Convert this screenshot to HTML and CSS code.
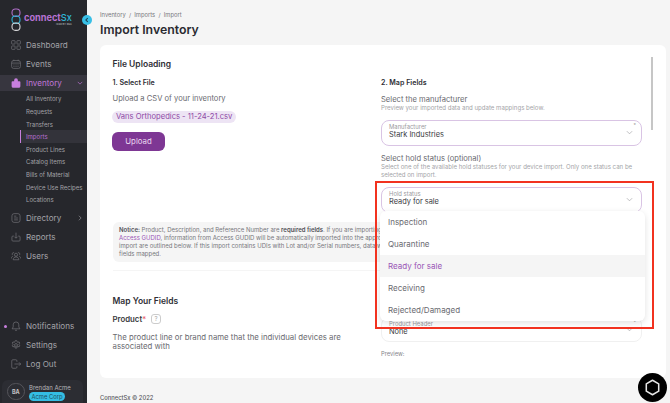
FILE: index.html
```html
<!DOCTYPE html>
<html lang="en">
<head>
    <meta charset="UTF-8">
    <title>Import Inventory</title>
    <link rel="stylesheet" href="styles.css">
</head>
<body>
<div id="app">
    <aside class="sidebar">
        <div class="brand">
            <svg class="brand-mark" width="12" height="23" viewBox="0 0 12 23" fill="none" stroke-width="1.1">
                <rect x="2" y="1" width="8" height="7.4" rx="3.4" stroke="#b06fc9"/>
                <rect x="2" y="8" width="8" height="7.4" rx="3.4" stroke="#2fb5d6"/>
                <rect x="2" y="15" width="8" height="7.4" rx="3.4" stroke="#d5d5d8"/>
            </svg>
            <div class="brand-text">
                <div class="brand-name">connect<span>Sx</span></div>
                <div class="brand-sub">ISSO BY RGA</div>
            </div>
        </div>

        <nav class="nav">
            <a class="nav-item">
                <svg class="icon" viewBox="0 0 16 16"><rect x="1" y="1" width="5.5" height="5.5" rx="1"/><rect x="9.5" y="1" width="5.5" height="5.5" rx="1"/><rect x="1" y="9.5" width="5.5" height="5.5" rx="1"/><rect x="9.5" y="9.5" width="5.5" height="5.5" rx="1"/></svg>
                Dashboard
            </a>
            <a class="nav-item">
                <svg class="icon" viewBox="0 0 16 16"><rect x="1" y="2.5" width="14" height="12.5" rx="3"/><path d="M1 6.5h14M4.5 1v2.5M11.500 1v2.500M4 9.500h1.500M7.300 9.500h1.500M10.500 9.500h1.500M4 12h1.500M7.300 12h1.500M10.500 12h1.500"/></svg>
                Events
            </a>
            <a class="nav-item active">
                <svg class="icon" viewBox="0 0 16 16"><path class="solid" d="M5 5V3.500a3 3 0 0 1 6 0V5h2.500a1.500 1.500 0 0 1 1.500 1.500V13a2.500 2.500 0 0 1-2.500 2.500h-9A2.500 2.500 0 0 1 1 13V6.500A1.500 1.500 0 0 1 2.500 5z"/></svg>
                Inventory
                <svg class="chev" viewBox="0 0 8 8"><path d="M1 2.500l3 3 3-3"/></svg>
            </a>
            <div class="subnav">
                <a class="sub-item">All Inventory</a>
                <a class="sub-item">Requests</a>
                <a class="sub-item">Transfers</a>
                <a class="sub-item current">Imports</a>
                <a class="sub-item">Product Lines</a>
                <a class="sub-item">Catalog Items</a>
                <a class="sub-item">Bills of Material</a>
                <a class="sub-item">Device Use Recipes</a>
                <a class="sub-item">Locations</a>
            </div>
            <a class="nav-item">
                <svg class="icon" viewBox="0 0 16 16"><rect x="1.500" y="1" width="13" height="14" rx="3.500"/><path d="M5 5h3.500M5 8h6M5 11h6"/></svg>
                Directory
                <svg class="chev" viewBox="0 0 8 8"><path d="M2.500 1l3 3-3 3"/></svg>
            </a>
            <a class="nav-item">
                <svg class="icon" viewBox="0 0 16 16"><path d="M4.500 6.500H3A1.500 1.500 0 0 0 1.500 8v5A1.500 1.500 0 0 0 3 14.500h10a1.500 1.500 0 0 0 1.500-1.500V8A1.500 1.500 0 0 0 13 6.500h-1.500M8 1v8.500M5.500 7.500L8 10l2.500-2.500"/></svg>
                Reports
            </a>
            <a class="nav-item">
                <svg class="icon" viewBox="0 0 16 16"><circle cx="8" cy="6" r="2.500"/><path d="M3.500 14c0-3 2-4.500 4.500-4.500s4.500 1.500 4.500 4.500zM5 2.800a2 2 0 0 0-2 3.700M11 2.800a2 2 0 0 1 2 3.700M.500 12c0-2 .8-3.200 2.500-3.700M15.500 12c0-2-.8-3.200-2.500-3.700"/></svg>
                Users
            </a>
        </nav>

        <nav class="nav nav-bottom">
            <a class="nav-item has-dot">
                <svg class="icon" viewBox="0 0 16 16"><path d="M8 1.500a4.500 4.500 0 0 0-4.500 4.500v3.500L1.800 12.500h12.400L12.500 9.500V6A4.500 4.500 0 0 0 8 1.500zM6.300 14.800h3.400"/></svg>
                Notifications
            </a>
            <a class="nav-item">
                <svg class="icon" viewBox="0 0 16 16"><circle cx="8" cy="8" r="2.300"/><path d="M6.800 1h2.400l.4 1.900 1.500.8 1.800-.7 1.200 2-1.400 1.300v1.400l1.400 1.300-1.200 2-1.800-.7-1.500.8-.4 1.900H6.800l-.4-1.900-1.500-.8-1.800.7-1.200-2 1.400-1.300V6.300L1.900 5l1.200-2 1.800.7 1.500-.8z"/></svg>
                Settings
            </a>
            <a class="nav-item">
                <svg class="icon" viewBox="0 0 16 16"><path d="M9.500 4.500V3A1.800 1.800 0 0 0 7.700 1.200H3A1.800 1.800 0 0 0 1.200 3v10A1.800 1.800 0 0 0 3 14.800h4.700A1.800 1.800 0 0 0 9.500 13v-1.500M5.500 8h10M12.800 5.300L15.500 8l-2.700 2.700"/></svg>
                Log Out
            </a>
        </nav>

        <div class="user">
            <div class="avatar">BA</div>
            <div class="user-info">
                <div class="user-name">Brendan Acme</div>
                <div class="user-org">Acme Corp</div>
            </div>
        </div>
    </aside>

    <main class="main">
        <div class="crumbs">Inventory&nbsp;&nbsp;/&nbsp;&nbsp;Imports&nbsp;&nbsp;/&nbsp;&nbsp;Import</div>
        <h1 class="page-title">Import Inventory</h1>

        <section class="card">
            <div class="columns">
                <div class="col">
                    <h2 class="section-title">File Uploading</h2>
                    <h3 class="step-title">1. Select File</h3>
                    <p class="lead">Upload a CSV of your inventory</p>
                    <div class="file-chip">Vans Orthopedics - 11-24-21.csv</div>
                    <button class="btn">Upload</button>
                </div>
                <div class="col col-map">
                    <h3 class="step-title">2. Map Fields</h3>
                    <p class="lead">Select the manufacturer</p>
                    <p class="hint">Preview your imported data and update mappings below.</p>
                    <div class="select">
                        <span class="select-label">Manufacturer</span>
                        <span class="select-value">Stark Industries</span>
                        <span class="req">*</span>
                        <svg class="select-chev" viewBox="0 0 8 8"><path d="M1 2.500l3 3 3-3"/></svg>
                    </div>
                    <p class="lead lead-second">Select hold status (optional)</p>
                    <p class="hint">Select one of the available hold statuses for your device import. Only one status can be<br>selected on import.</p>
                    <div class="select select-open">
                        <span class="select-label">Hold status</span>
                        <span class="select-value">Ready for sale</span>
                        <svg class="select-chev" viewBox="0 0 8 8"><path d="M1 2.500l3 3 3-3"/></svg>
                        <ul class="menu">
                            <li>Inspection</li>
                            <li>Quarantine</li>
                            <li class="selected">Ready for sale</li>
                            <li>Receiving</li>
                            <li>Rejected/Damaged</li>
                        </ul>
                    </div>
                </div>
            </div>

            <div class="notice">
                <b>Notice:</b> Product, Description, and Reference Number are <b>required fields</b>. If you are importing devices found in<br>
                <a>Access GUDID</a>, information from Access GUDID will be automatically imported into the appropriate fields. Steps to<br>
                import are outlined below. If this import contains UDIs with Lot and/or Serial numbers, data will be validated with those<br>
                fields mapped.
            </div>
            <hr class="rule">

            <div class="columns columns-fields">
                <div class="col">
                    <h2 class="section-title">Map Your Fields</h2>
                    <div class="field-title">Product<span>*</span><i class="help">?</i></div>
                    <p class="lead lead-tight">The product line or brand name that the individual devices are associated with</p>
                </div>
                <div class="col col-header">
                    <div class="select select-faint">
                        <span class="select-label">Product Header</span>
                        <span class="select-value">None</span>
                        <span class="req">*</span>
                        <svg class="select-chev" viewBox="0 0 8 8"><path d="M1 2.500l3 3 3-3"/></svg>
                    </div>
                    <p class="preview">Preview:</p>
                </div>
            </div>
            <div class="scrollbar"></div>
        </section>

        <footer class="footer">ConnectSx © 2022</footer>
    </main>

    <button class="collapse">
        <svg viewBox="0 0 8 8"><path d="M5 1.500L2.500 4 5 6.500"/></svg>
    </button>
    <div class="callout"></div>
    <button class="chat">
        <svg viewBox="0 0 20 20"><path d="M10 1.500l7.300 4.200v8.600L10 18.500l-7.300-4.200V5.700z"/></svg>
    </button>
</div>
</body>
</html>
```

FILE: styles.css
```css
html * {
    box-sizing: border-box;
}

body {
    margin: 0;
    color: #55555c;
    font-family: "Inter", "Liberation Sans", sans-serif;
    font-size: 8px;
    background: #f5f5f5;
}

h1, h2, h3, p, ul {
    margin: 0;
    padding: 0;
}

#app {
    display: flex;
    position: relative;
    width: 670px;
    height: 403px;
    overflow: hidden;
}

/* sidebar */

.sidebar {
    display: flex;
    flex-direction: column;
    flex: 0 0 87px;
    height: 403px;
    background: #26272c;
    color: #a3a3a8;
}

.brand {
    display: flex;
    align-items: center;
    gap: 2px;
    height: 35px;
    padding: 4px 0 0 10px;
}

.brand-name {
    color: #b772d3;
    font-size: 9.200px;
    font-weight: 700;
    line-height: 10px;
}

.brand-name span {
    color: #2fb5d6;
    font-weight: 500;
}

.brand-sub {
    color: #c9c9cc;
    font-size: 2.500px;
    line-height: 3px;
    text-align: right;
}

.nav-item {
    display: flex;
    align-items: center;
    gap: 5px;
    position: relative;
    height: 19px;
    padding-left: 11px;
    font-size: 8.100px;
}

.icon {
    flex: 0 0 10px;
    width: 10px;
    height: 10px;
    fill: none;
    stroke: #7b7b81;
    stroke-width: 1;
}

.icon .solid {
    fill: #c77fdd;
    stroke: none;
}

.nav-item.active {
    height: 16px;
    margin-top: 2px;
    background: #37363f;
    color: #c077d8;
}

.chev {
    position: absolute;
    right: 4px;
    width: 6px;
    height: 6px;
    fill: none;
    stroke: #8b8b90;
    stroke-width: 1;
}

.active .chev {
    stroke: #b06fc9;
}

.subnav {
    display: flex;
    flex-direction: column;
    padding: 1.700px 0 2px 0;
}

.sub-item {
    display: flex;
    align-items: center;
    height: 12.600px;
    padding-left: 26px;
    font-size: 6px;
}

.sub-item.current {
    margin-left: 20px;
    padding-left: 5px;
    border-left: 1px solid #c77fdd;
    background: #33333a;
    color: #b56fd0;
}

.nav-bottom {
    margin-top: auto;
}

.has-dot::before {
    content: "";
    position: absolute;
    left: 4px;
    top: 8px;
    width: 3px;
    height: 3px;
    border-radius: 50%;
    background: #c77fdd;
}

.user {
    display: flex;
    align-items: center;
    gap: 4.500px;
    height: 23px;
    margin: 6.500px 4px 0 2px;
    padding-left: 5px;
    border-radius: 6px 6px 0 0;
    background: #2c2d33;
}

.avatar {
    display: flex;
    align-items: center;
    justify-content: center;
    flex: 0 0 17.500px;
    height: 17.500px;
    border: 1px solid #55555b;
    border-radius: 50%;
    color: #c4c4c7;
    font-size: 5.500px;
    font-weight: 700;
}

.user-name {
    color: #b5b5b9;
    font-size: 6px;
    line-height: 9px;
}

.user-org {
    width: 36px;
    height: 9px;
    border-radius: 4.500px;
    background: #34bde4;
    color: #1d4e60;
    font-size: 5.800px;
    line-height: 9px;
    text-align: center;
}

/* main */

.main {
    display: flex;
    flex-direction: column;
    flex: 1;
    padding: 0 5px 0 13px;
}

.crumbs {
    margin-top: 11px;
    font-size: 5.800px;
    line-height: 8px;
    color: #77777c;
}

.page-title {
    margin-top: 2px;
    color: #2b2b31;
    font-size: 12.300px;
    font-weight: 600;
    line-height: 17px;
}

.card {
    position: relative;
    height: 333px;
    margin-top: 7px;
    padding: 12.500px 23px 0 12.500px;
    overflow: hidden;
    border-radius: 6px;
    background: #fff;
}

.columns {
    display: grid;
    grid-template-columns: 268.500px 261px;
}

.section-title {
    color: #2f2f36;
    font-size: 8.500px;
    font-weight: 600;
    line-height: 12px;
}

.step-title {
    margin-top: 8px;
    color: #2f2f36;
    font-size: 7.100px;
    font-weight: 600;
    line-height: 10px;
}

.lead {
    margin-top: 6.500px;
    font-size: 7.600px;
    line-height: 9px;
    color: #6a6a70;
}

.lead-second {
    margin-top: 8px;
}

.lead-tight {
    width: 240px;
    margin-top: 9px;
    font-size: 7.800px;
    line-height: 8.700px;
}

.file-chip {
    width: fit-content;
    margin-top: 8px;
    margin-left: -.500px;
    padding: 0 4px;
    border-radius: 6px;
    background: #ede4f4;
    color: #8e4aa6;
    font-size: 7.600px;
    line-height: 12px;
}

.btn {
    display: block;
    width: 53px;
    height: 19px;
    margin-top: 8.500px;
    margin-left: -.500px;
    border: 0;
    border-radius: 6px;
    background: #7e3794;
    color: #ead9f0;
    font-family: inherit;
    font-size: 7.800px;
}

.col-map {
    padding-top: 12.500px;
}

.hint {
    margin-top: 0;
    color: #a4a4a8;
    font-size: 6.100px;
    line-height: 8px;
    white-space: nowrap;
}

.select {
    position: relative;
    height: 25.500px;
    margin-top: 8.500px;
    padding: 2px 7px;
    border: 1px solid #d9c4e4;
    border-radius: 8px;
}

.select-label {
    display: block;
    color: #9a9a9e;
    font-size: 5.900px;
    line-height: 7px;
}

.select-value {
    display: block;
    color: #3a3a40;
    font-size: 7.400px;
    line-height: 10px;
}

.req {
    position: absolute;
    top: 1px;
    right: 5px;
    color: #999;
    font-size: 5px;
}

.select-chev {
    position: absolute;
    top: 8px;
    right: 8px;
    width: 7px;
    height: 7px;
    fill: none;
    stroke: #a5a5a9;
    stroke-width: .8;
}

.menu {
    position: absolute;
    z-index: 2;
    top: 22.500px;
    left: -2px;
    width: 264.500px;
    height: 110px;
    overflow: hidden;
    list-style: none;
    border-radius: 6px;
    background: #fff;
    box-shadow: 0 2px 6px rgba(0, 0, 0, .12);
}

.menu li {
    height: 22px;
    padding-left: 8px;
    color: #6a6a70;
    font-size: 8px;
    line-height: 22px;
}

.menu .selected {
    background: #f5f5f5;
    color: #9a55b5;
}

.notice {
    width: 530px;
    margin-top: 9.500px;
    padding: 3.500px 6.500px;
    border-radius: 6px;
    background: #f5f5f5;
    color: #77777c;
    font-size: 6px;
    line-height: 8.200px;
    white-space: nowrap;
}

.notice b {
    color: #4f4f56;
    font-weight: 600;
}

.notice a {
    color: #9a55b5;
}

.rule {
    width: 530px;
    height: 1px;
    margin: 8.500px 0 0;
    border: 0;
    background: #f5f5f5;
}

.columns-fields {
    margin-top: 24px;
}

.field-title {
    display: flex;
    align-items: center;
    margin-top: 7px;
    color: #3a3a40;
    font-size: 7.800px;
    font-weight: 600;
    line-height: 10px;
}

.field-title span {
    align-self: flex-start;
    color: #e8555f;
    font-weight: 400;
}

.help {
    width: 10px;
    height: 10px;
    margin-left: 5px;
    border: 1px solid #ccc;
    border-radius: 3px;
    color: #aaa;
    font-size: 6px;
    font-style: normal;
    font-weight: 400;
    line-height: 8px;
    text-align: center;
}

.col-header {
    padding-top: 13px;
}

.select-faint {
    border-color: #f0f0f0;
}

.preview {
    margin-top: 8px;
    color: #85858a;
    font-size: 5.800px;
    line-height: 8px;
}

.scrollbar {
    position: absolute;
    top: 12px;
    right: 13px;
    width: 1.500px;
    height: 73px;
    background: #c6c6c6;
}

.footer {
    margin-top: 16px;
    color: #55555c;
    font-size: 5.800px;
    font-weight: 500;
    line-height: 8px;
}

/* things lying over the page */

.collapse {
    position: absolute;
    top: 15px;
    left: 82px;
    width: 10px;
    height: 10px;
    padding: 2px;
    border: 0;
    border-radius: 50%;
    background: #38bfe6;
}

.collapse svg {
    display: block;
    width: 6px;
    height: 6px;
    fill: none;
    stroke: #1f3d4c;
    stroke-width: 1.400;
}

.callout {
    position: absolute;
    z-index: 3;
    top: 181px;
    left: 374.500px;
    width: 279px;
    height: 148px;
    border: 2px solid #f2321f;
    pointer-events: none;
}

.chat {
    position: absolute;
    z-index: 4;
    top: 373px;
    left: 638px;
    width: 29px;
    height: 29px;
    padding: 6px;
    border: 0;
    border-radius: 50%;
    background: #000;
}

.chat svg {
    display: block;
    width: 17px;
    height: 17px;
    fill: none;
    stroke: #e6e6e6;
    stroke-width: 1.800;
    stroke-linejoin: round;
}
```
